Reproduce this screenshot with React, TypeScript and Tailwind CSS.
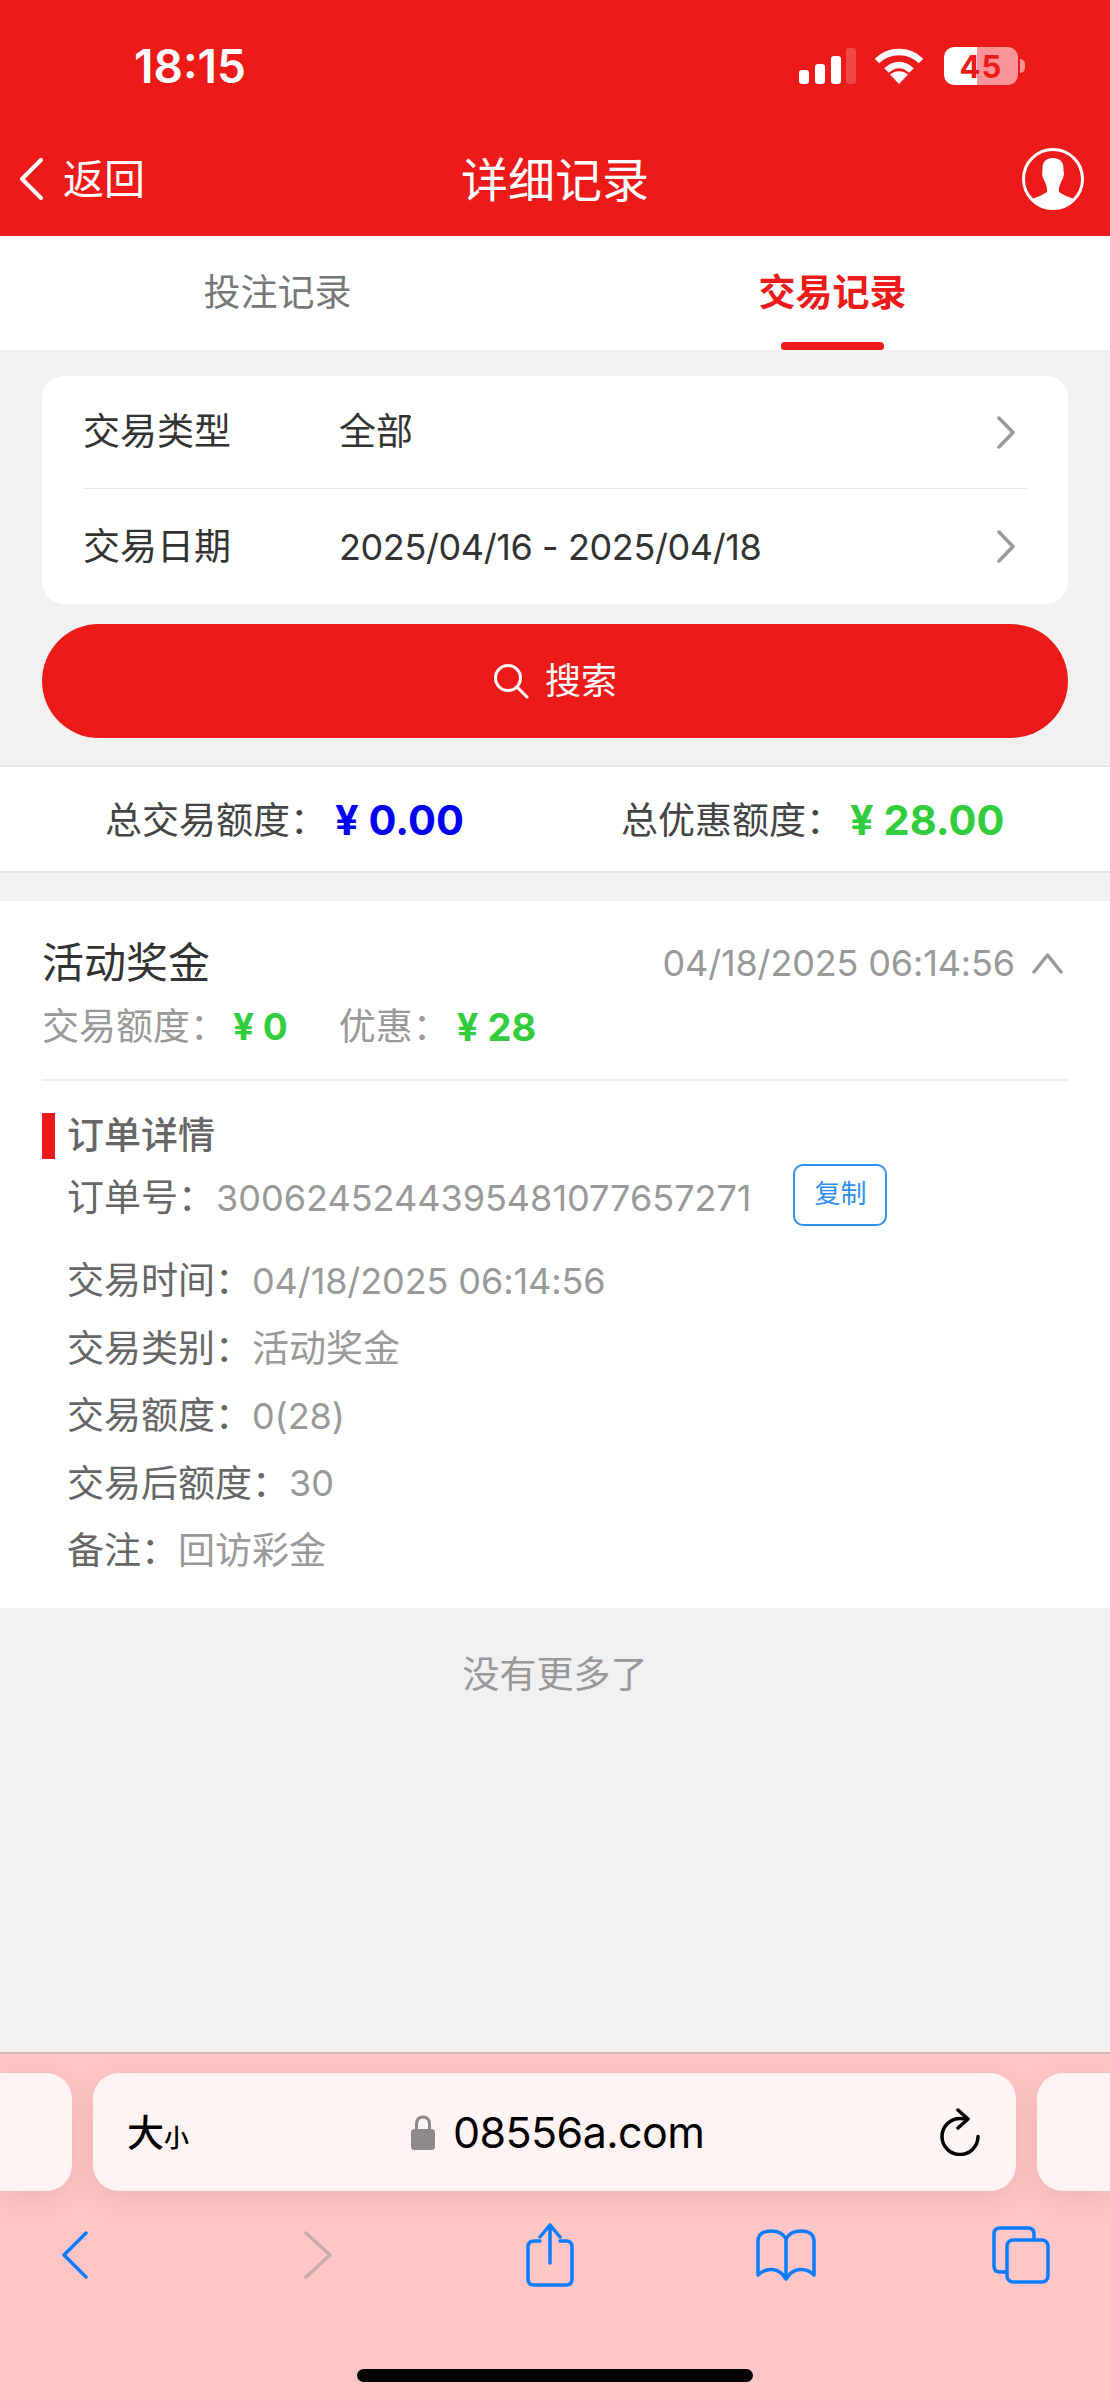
import React from "react"

const rows = [
    { label: "交易时间：", value: "04/18/2025 06:14:56", latin: true },
    { label: "交易类别：", value: "活动奖金", latin: false },
    { label: "交易额度：", value: "0(28)", latin: true },
    { label: "交易后额度：", value: "30", latin: true },
    { label: "备注：", value: "回访彩金", latin: false },
]

function StatusBar() {
    return (
        <div className="h-[92px] pt-[40px] flex items-center justify-between pl-[134px] pr-[92px]">
            <span className="text-[46px] leading-none font-semibold text-white -mt-[1px]">18:15</span>
            <div className="flex items-center">
                <svg width="58" height="36" viewBox="0 0 58 36" fill="white">
                    <rect x="1" y="22" width="10" height="14" rx="3" />
                    <rect x="17" y="16" width="10" height="20" rx="3" />
                    <rect x="33" y="8" width="10" height="28" rx="3" />
                    <rect x="48" y="0" width="10" height="36" rx="3" fillOpacity="0.2" />
                </svg>
                <svg className="ml-[18px]" width="50" height="36" viewBox="0 0 50 36" fill="none" stroke="white" strokeWidth="6.5">
                    <path d="M3 13C15 1 35 1 47 13" />
                    <path d="M12.5 22.5C20 15 30 15 37.500 22.500" />
                    <path d="M16 26.500C21 22 29 22 34 26.500L25 36Z" fill="white" stroke="none" />
                </svg>
                <div className="ml-[20px] relative w-[74px] h-[38px] rounded-[10px] bg-[linear-gradient(90deg,#ffffff_45%,#fa9497_45%)] flex items-center justify-center">
                    <span className="text-[31px] leading-none font-bold text-[#ec1a18] tracking-[1px]">45</span>
                    <div className="absolute -right-[7px] top-[12px] w-[5px] h-[14px] rounded-r-full bg-[#fa9497]" />
                </div>
            </div>
        </div>
    )
}

function NavBar() {
    return (
        <div className="h-[144px] pt-[30px] flex items-center justify-between pl-[19px] pr-[26px] text-white">
            <div className="flex items-center w-[200px]">
                <svg width="24" height="42" viewBox="0 0 24 42" fill="none" stroke="white" strokeWidth="4" strokeLinecap="round" strokeLinejoin="round">
                    <path d="M22 2L3 21L22 40" />
                </svg>
                <span className="ml-[20px] text-[41px] leading-none">返回</span>
            </div>
            <span className="text-[47px] leading-none">详细记录</span>
            <div className="w-[193px] flex justify-end">
                <svg width="62" height="62" viewBox="0 0 62 62">
                    <circle cx="31" cy="31" r="29.500" fill="none" stroke="white" strokeWidth="3" />
                    <path
                        fill="white"
                        d="M31 10C23 10 20 15 20.500 22L20 26C20.500 29 21.500 31 22.500 33C23.500 36 25 38 25 41L25 44C21 47 15 49 10 51C14 56 20 60 25 61L37 61C42 60 48 56 52 51C47 49 41 47 37 44L37 41C37 38 38.500 36 39.500 33C40.500 31 41.500 29 42 26L41.500 22C42 15 39 10 31 10Z"
                    />
                </svg>
            </div>
        </div>
    )
}

function Tabs() {
    return (
        <div className="h-[114px] bg-white flex">
            <div className="w-1/2 flex items-center justify-center text-[37px] text-[#777]">投注记录</div>
            <div className="w-1/2 relative flex items-center justify-center text-[37px] font-semibold text-[#ec1a18]">
                交易记录
                <div className="absolute bottom-0 left-[226px] w-[103px] h-[8px] rounded-t-[4px] rounded-b-[3px] bg-[#ec1a18]" />
            </div>
        </div>
    )
}

function Chevron() {
    return (
        <svg width="20" height="33" viewBox="0 0 20 33" fill="none" stroke="#999" strokeWidth="3.500" strokeLinecap="round" strokeLinejoin="round">
            <path d="M3 2L17 16.500L3 31" />
        </svg>
    )
}

function FilterRow({ label, value, latin, className }: { label: string; value: string; latin?: boolean; className: string }) {
    return (
        <div className={`${className} flex items-center text-[37px] text-[#333]`}>
            <span className="w-[256px]">{label}</span>
            <span className={latin ? "flex-1 text-[36px] tracking-[-0.4px]" : "flex-1"}>{value}</span>
            <span className="mr-[8px]"><Chevron /></span>
        </div>
    )
}

function Filters() {
    return (
        <div className="px-[42px] pt-[26px]">
            <div className="h-[228px] rounded-[22px] bg-white pl-[41px] pr-[41px] flex flex-col">
                <FilterRow className="h-[112px] mr-[3px]" label="交易类型" value="全部" />
                <div className="h-[1px] bg-[#e8e8ee] shrink-0" />
                <FilterRow className="flex-1 mr-[3px]" label="交易日期" value="2025/04/16 - 2025/04/18" latin />
            </div>
            <button className="mt-[20px] w-full h-[114px] rounded-full bg-[#ec1a18] flex items-center justify-center text-white text-[36px]">
                <svg width="36" height="36" viewBox="0 0 36 36" fill="none" stroke="white" strokeWidth="3" strokeLinecap="round">
                    <circle cx="15" cy="15" r="12.500" />
                    <path d="M24 24L34 34" />
                </svg>
                <span className="ml-[16px]">搜索</span>
            </button>
        </div>
    )
}

function Summary() {
    return (
        <div className="mt-[27px] h-[108px] pt-[3px] bg-white border-y-2 border-[#e4e4e4] flex items-center text-[37px] text-[#444]">
            <div className="w-[621px] pl-[105px] flex items-center">
                <span>总交易额度：</span>
                <span className="ml-[8px] text-[41.500px] font-bold text-[#0000f5]">¥ 0.00</span>
            </div>
            <div className="flex items-center">
                <span>总优惠额度：</span>
                <span className="ml-[7px] text-[41.500px] font-bold text-[#32cd3c]">¥ 28.00</span>
            </div>
        </div>
    )
}

function RecordCard() {
    return (
        <div className="mt-[28px] bg-white h-[707px] px-[42px]">
            <div className="h-[180px] border-b-2 border-[#eeeeee]">
                <div className="pt-[32px] h-[92px] flex items-center justify-between">
                    <span className="text-[42px] text-[#333] leading-none">活动奖金</span>
                    <div className="flex items-center">
                        <span className="text-[36px] text-[#999] tracking-[-0.15px]">04/18/2025 06:14:56</span>
                        <svg className="ml-[17px] mr-[5px]" width="31" height="22" viewBox="0 0 31 22" fill="none" stroke="#999" strokeWidth="3.500" strokeLinecap="round" strokeLinejoin="round">
                            <path d="M2 20L15.500 3L29 20" />
                        </svg>
                    </div>
                </div>
                <div className="mt-[9px] flex items-center text-[37px] text-[#999] leading-[50px]">
                    <span>交易额度：</span>
                    <span className="ml-[6px] text-[37px] font-bold text-[#32cd3c]">¥ 0</span>
                    <span className="ml-[51px]">优惠：</span>
                    <span className="ml-[7px] text-[38px] font-bold text-[#32cd3c]">¥ 28</span>
                </div>
            </div>
            <div className="mt-[32px] h-[46px] border-l-[13px] border-[#ec1a18] pl-[12px] flex items-center text-[37px] font-medium text-[#666]">订单详情</div>
            <div className="h-[78px] pl-[25px] flex items-center text-[37px] text-[#666]">
                <span>订单号：</span>
                <span className="text-[36px] text-[#999] ml-[1px]">3006245244395481077657271</span>
                <button className="ml-[42px] -mt-[6px] w-[94px] h-[62px] rounded-[10px] border-2 border-[#2f8ff5] text-[#2f8ff5] text-[26px] leading-none pb-[2px]">复制</button>
            </div>
            <div className="mt-[10px] pl-[25px]">
                {rows.map((row) => (
                    <div key={row.label} className="h-[67.500px] flex items-center text-[37px] text-[#666]">
                        <span>{row.label}</span>
                        <span className={row.latin ? "text-[36px] text-[#999] tracking-[-0.1px]" : "text-[#999]"}>{row.value}</span>
                    </div>
                ))}
            </div>
        </div>
    )
}

function AddressBar() {
    return (
        <div className="flex gap-[21px] h-[118px] mt-[19px]">
            <div className="w-[72px] bg-[#fff4f3] rounded-r-[26px] shadow-[0_8px_28px_rgba(120,60,60,0.12)]" />
            <div className="w-[923px] bg-[#fff4f3] rounded-[26px] shadow-[0_8px_28px_rgba(120,60,60,0.12)] flex items-center pl-[34px] pr-[36px] text-black">
                <div className="w-[284px] flex items-baseline pt-[2px]">
                    <span className="text-[37px] font-medium leading-none">大</span>
                    <span className="text-[25px] font-medium leading-none">小</span>
                </div>
                <svg width="24" height="35" viewBox="0 0 24 35">
                    <path d="M5.500 15V9.500C5.500 4.500 8 2 12 2C16 2 18.500 4.500 18.500 9.500V15" fill="none" stroke="#8e8a8c" strokeWidth="3" />
                    <rect x="0" y="14" width="24" height="21" rx="3.500" fill="#8e8a8c" />
                </svg>
                <span className="ml-[18px] text-[43px] tracking-[-0.6px] leading-none flex-1">08556a.com</span>
                <svg width="40" height="48" viewBox="0 0 40 48" fill="none" stroke="black" strokeWidth="3.500" strokeLinecap="round" strokeLinejoin="round">
                    <path d="M27 11C25 10.600 22 10.500 20 10.500A18 18 0 1 0 38 28.500" />
                    <path d="M18 2L28 11L18 20" />
                </svg>
            </div>
            <div className="w-[73px] bg-[#fff4f3] rounded-l-[26px] shadow-[0_8px_28px_rgba(120,60,60,0.12)]" />
        </div>
    )
}

function SafariToolbar() {
    return (
        <div className="mt-[32px] h-[64px] flex items-center relative">
            <svg className="ml-[62px]" width="26" height="48" viewBox="0 0 26 48" fill="none" stroke="#0a7cff" strokeWidth="3.500" strokeLinecap="round" strokeLinejoin="round">
                <path d="M24 2L2 24L24 46" />
            </svg>
            <svg className="ml-[216px]" width="28" height="48" viewBox="0 0 28 48" fill="none" stroke="#c8abab" strokeWidth="3.500" strokeLinecap="round" strokeLinejoin="round">
                <path d="M2 2L26 24L2 46" />
            </svg>
            <svg className="ml-[194px]" width="48" height="64" viewBox="0 0 48 64" fill="none" stroke="#0a7cff" strokeWidth="3.500" strokeLinecap="round" strokeLinejoin="round">
                <path d="M14 18H8C4 18 2 20 2 24V56C2 60 4 62 8 62H40C44 62 46 60 46 56V24C46 20 44 18 40 18H34" />
                <path d="M24 40V2M14 14L24 2L34 14" />
            </svg>
            <svg className="ml-[182px]" width="60" height="52" viewBox="0 0 60 52" fill="none" stroke="#0a7cff" strokeWidth="3.500" strokeLinecap="round" strokeLinejoin="round">
                <path d="M30 10C27 4 21 2 15 2C9 2 2 4 2 12V46C10 38 23 38 30 50C37 38 50 38 58 46V12C58 4 51 2 45 2C39 2 33 4 30 10Z" />
                <path d="M30 10V48" />
            </svg>
            <svg className="ml-[176px]" width="58" height="58" viewBox="0 0 58 58" fill="none" stroke="#0a7cff" strokeWidth="3.500" strokeLinecap="round" strokeLinejoin="round">
                <path d="M14 46H8C4 46 2 44 2 40V8C2 4 4 2 8 2H36C40 2 42 4 42 8V14" />
                <rect x="15" y="14" width="41" height="42" rx="6" />
            </svg>
        </div>
    )
}

export default function App() {
    return (
        <div className="w-[1110px] h-[2400px] overflow-hidden flex flex-col bg-[#f1f1f1] font-[family-name:Inter,'Noto_Sans_CJK_SC',sans-serif]">
            <div className="bg-[#ec1a18]">
                <StatusBar />
                <NavBar />
            </div>
            <Tabs />
            <Filters />
            <Summary />
            <RecordCard />
            <div className="h-[134px] flex items-center justify-center text-[37px] text-[#999]">没有更多了</div>
            <div className="flex-1" />
            <div className="h-[348px] bg-[#fec6c6] border-t-2 border-[#dcb4b4]">
                <AddressBar />
                <SafariToolbar />
                <div className="mt-[82px] mx-auto w-[396px] h-[13px] rounded-full bg-black" />
            </div>
        </div>
    )
}
